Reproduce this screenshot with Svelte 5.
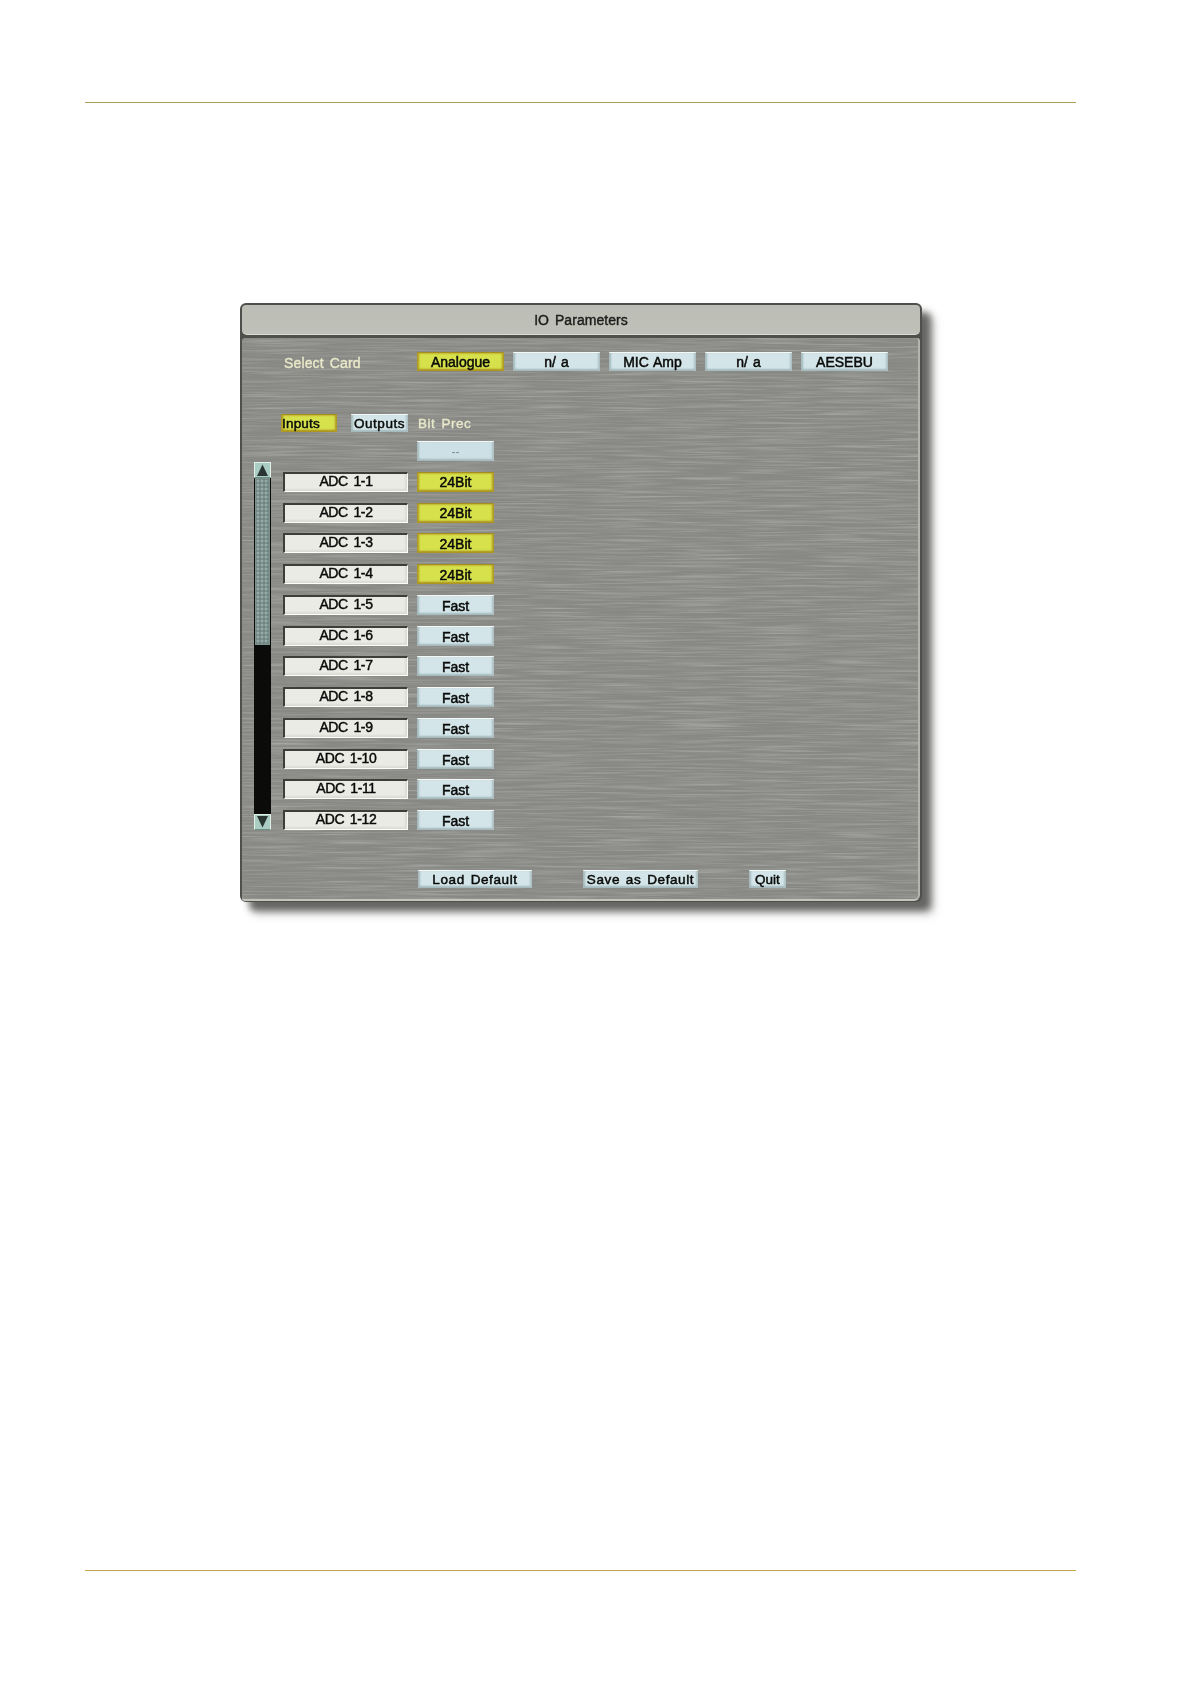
<script>
  const cards = [
    { label: 'Analogue', on: true },
    { label: 'n/ a' },
    { label: 'MIC Amp' },
    { label: 'n/ a' },
    { label: 'AESEBU' }
  ];
  const rows = Array.from({ length: 12 }, (_, i) => ({
    name: `ADC 1-${i + 1}`,
    value: i < 4 ? '24Bit' : 'Fast',
    on: i < 4
  }));
</script>

<div class="page">
  <div class="rule"></div>

  <section class="panel">
    <header class="title">IO Parameters</header>
    <div class="body">
      <svg class="metal" width="100%" height="100%" aria-hidden="true">
        <filter id="brush" x="0" y="0" width="100%" height="100%">
          <feTurbulence type="fractalNoise" baseFrequency="0.014 0.55" numOctaves="2" seed="7" />
          <feColorMatrix type="matrix" values="0 0 0 0 0.60  0 0 0 0 0.60  0 0 0 0 0.58  0.9 0 0 0 -0.42" />
        </filter>
        <filter id="brushdark" x="0" y="0" width="100%" height="100%">
          <feTurbulence type="fractalNoise" baseFrequency="0.012 0.5" numOctaves="2" seed="23" />
          <feColorMatrix type="matrix" values="0 0 0 0 0.44  0 0 0 0 0.45  0 0 0 0 0.43  0.9 0 0 0 -0.42" />
        </filter>
        <rect width="100%" height="100%" filter="url(#brushdark)" />
        <rect width="100%" height="100%" filter="url(#brush)" />
      </svg>

      <div class="content">
        <div class="card-row">
          <span class="label select">Select Card</span>
          <div class="cards">
            {#each cards as c}
              <button class="btn card" class:on={c.on}>{c.label}</button>
            {/each}
          </div>
        </div>

        <div class="head-row">
          <button class="btn inputs on">Inputs</button>
          <button class="btn outputs">Outputs</button>
          <span class="label prec">Bit Prec</span>
        </div>

        <div class="main">
          <div class="scroll">
            <div class="arrow"><svg width="15" height="14" viewBox="0 0 15 14"><path d="M7.5 1.5 13 13H2Z" fill="#2a3532" /></svg></div>
            <div class="thumb"></div>
            <div class="track"></div>
            <div class="arrow"><svg width="15" height="14" viewBox="0 0 15 14"><path d="M2 1h11L7.5 12.5Z" fill="#2a3532" /></svg></div>
          </div>
          <div class="grid">
            <span></span>
            <button class="btn value dash">--</button>
            {#each rows as r}
              <div class="name">{r.name}</div>
              <button class="btn value" class:on={r.on}>{r.value}</button>
            {/each}
          </div>
        </div>

        <div class="foot">
          <button class="btn wide load">Load Default</button>
          <button class="btn wide save">Save as Default</button>
          <button class="btn wide quit">Quit</button>
        </div>
      </div>
    </div>
  </section>

  <div class="rule bottom"></div>
</div>

<style>
  :global(body) {
    margin: 0;
    background: #fff;
  }
  .page {
    width: 1191px;
    height: 1684px;
    padding-top: 102px;
    box-sizing: border-box;
    font-family: "Liberation Sans", Arial, sans-serif;
  }
  .rule {
    height: 1px;
    margin: 0 115px 0 85px;
    background: #ad9c52;
  }
  .rule.bottom {
    margin-top: 668px;
    background: #c4a84e;
  }
  .panel {
    width: 682px;
    height: 599px;
    box-sizing: border-box;
    margin: 200px 0 0 240px;
    border: 2px solid #4f504c;
    border-radius: 6px;
    background: #4f504c;
    box-shadow: 9px 9px 7px rgba(50, 50, 47, 0.7), 13px 13px 8px rgba(120, 120, 118, 0.25);
  }
  .title {
    height: 30px;
    border-radius: 4px 4px 5px 5px;
    background: linear-gradient(#bcbdb4, #bfc0b7);
    border-bottom: 1px solid #dcdcd4;
    box-sizing: border-box;
    text-align: center;
    line-height: 30px;
    font-size: 14px;
    letter-spacing: 0.05px;
    word-spacing: 2px;
    color: #1c1c1a;
    -webkit-text-stroke: 0.4px #1c1c1a;
    filter: blur(0.25px);
  }
  .body {
    position: relative;
    height: 563px;
    margin-top: 3px;
    box-sizing: border-box;
    border-right: 2px solid #b4b5ae;
    border-bottom: 2px solid #c4c5bd;
    border-radius: 3px 3px 6px 3px;
    background: #888985;
    overflow: hidden;
  }
  .metal {
    position: absolute;
    inset: 0;
  }
  .content {
    position: relative;
    padding: 14px 0 0 12px;
    height: 100%;
    box-sizing: border-box;
    filter: blur(0.4px);
  }
  .btn {
    display: block;
    margin: 0;
    padding: 0;
    box-sizing: border-box;
    border: 0;
    border-top: 1px solid #f4f9f7;
    border-radius: 1px;
    background: #d3e5e8;
    box-shadow: inset 3px 0 2px -1px #a5b9bc, inset -3px 0 2px -1px #adc0c3, inset 0 -3px 2px -1px #a3b8bc;
    color: #0a0b09;
    font: 14px "Liberation Sans", Arial, sans-serif;
    -webkit-text-stroke: 0.5px #0a0b09;
    text-align: center;
    white-space: nowrap;
  }
  .btn.on {
    border-top: 1px solid #a58d1e;
    background: #d6e14c;
    box-shadow: inset 2px 0 2px #b19a22, inset -2px 0 2px #b19a22, inset 0 -2px 2px #a98f1e;
  }
  .label {
    color: #e9e9c9;
    font-size: 14px;
    letter-spacing: 0.5px;
    word-spacing: 2px;
    -webkit-text-stroke: 0.35px #e9e9c9;
  }
  .card-row {
    display: flex;
    align-items: center;
    height: 19px;
  }
  .select {
    width: 133px;
    margin-left: 30px;
    padding-top: 2px;
    letter-spacing: 0.15px;
  }
  .cards {
    display: flex;
    gap: 9px;
  }
  .card {
    width: 87px;
    height: 19px;
    line-height: 16px;
    word-spacing: 1px;
  }
  .card.on {
    line-height: 14px;
  }
  .head-row {
    display: flex;
    align-items: center;
    height: 18px;
    margin-top: 43px;
  }
  .inputs {
    width: 56px;
    height: 18px;
    margin-left: 27px;
    padding: 0 0 0 1px;
    text-align: left;
    font-size: 13.5px;
    letter-spacing: 0.2px;
  }
  .outputs {
    width: 57px;
    height: 18px;
    margin-left: 14px;
    font-size: 13.5px;
    letter-spacing: 0.5px;
  }
  .prec {
    margin-left: 10px;
    font-size: 13.5px;
  }
  .main {
    display: flex;
    margin-top: 9px;
  }
  .scroll {
    display: flex;
    flex-direction: column;
    width: 17px;
    height: 368px;
    margin-top: 21px;
    box-sizing: border-box;
    background: #0b0b09;
  }
  .arrow {
    flex: none;
    height: 16px;
    box-sizing: border-box;
    display: flex;
    align-items: center;
    justify-content: center;
    background: #a9cdc2;
    border: 1px solid #e3efe9;
    border-bottom-color: #6f8f84;
  }
  .thumb {
    flex: none;
    height: 167px;
    margin: 0 1px;
    background-color: #93aaa6;
    background-image:
      linear-gradient(90deg, rgba(85, 103, 100, 0.35) 50%, transparent 50%),
      linear-gradient(rgba(85, 103, 100, 0.35) 50%, transparent 50%);
    background-size: 4px 4px;
    box-shadow: inset 0 0 0 1px #7d918c;
  }
  .track {
    flex: 1;
  }
  .grid {
    display: grid;
    grid-template-columns: 125px 77px;
    grid-auto-rows: 20px;
    column-gap: 9px;
    row-gap: 10.75px;
    margin-left: 12px;
  }
  .value {
    width: 77px;
    height: 20px;
    padding-top: 1px;
  }
  .value.on {
    padding-top: 0;
  }
  .value.dash {
    color: #7f8d90;
    -webkit-text-stroke: 0;
    font-size: 12px;
    background: #cde0e5;
  }
  .name {
    height: 20px;
    box-sizing: border-box;
    background: #ebebe6;
    border-top: 2px solid #3d3d39;
    border-left: 2px solid #3d3d39;
    border-right: 1px solid #fbfbf8;
    border-bottom: 1px solid #fdfdfa;
    box-shadow: inset -2px -2px 2px #dcdcd6;
    text-align: center;
    line-height: 15px;
    font-size: 14px;
    word-spacing: 2px;
    letter-spacing: -0.35px;
    color: #0a0b09;
    -webkit-text-stroke: 0.45px #0a0b09;
  }
  .foot {
    display: flex;
    margin-top: 40px;
    margin-left: 164px;
  }
  .wide {
    height: 18px;
    line-height: 15px;
    font-size: 13.5px;
    letter-spacing: 0.6px;
    word-spacing: 1.5px;
  }
  .load {
    width: 114px;
  }
  .save {
    width: 115px;
    margin-left: 51px;
  }
  .quit {
    width: 37px;
    margin-left: 51px;
    letter-spacing: 0;
  }
</style>
